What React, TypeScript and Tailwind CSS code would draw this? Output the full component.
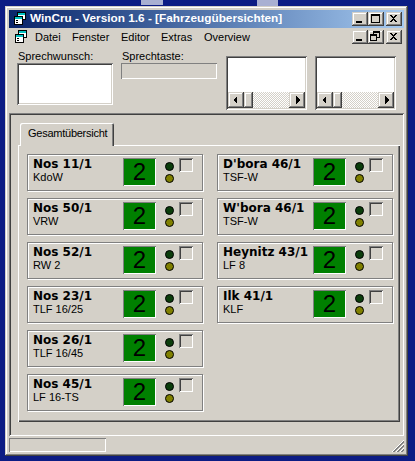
import React from 'react';

// classic 3d edges
const raised =
  'shadow-[inset_-1px_-1px_#404040,inset_1px_1px_#d4d0c8,inset_-2px_-2px_#808080,inset_2px_2px_#ffffff]';
const sunken =
  'shadow-[inset_1px_1px_#808080,inset_-1px_-1px_#ffffff,inset_2px_2px_#404040,inset_-2px_-2px_#d4d0c8]';
const thinSunken = 'shadow-[inset_1px_1px_#808080,inset_-1px_-1px_#ffffff]';

type Vehicle = { name: string; type: string };

const LEFT: Vehicle[] = [
  { name: 'Nos 11/1', type: 'KdoW' },
  { name: 'Nos 50/1', type: 'VRW' },
  { name: 'Nos 52/1', type: 'RW 2' },
  { name: 'Nos 23/1', type: 'TLF 16/25' },
  { name: 'Nos 26/1', type: 'TLF 16/45' },
  { name: 'Nos 45/1', type: 'LF 16-TS' },
];

const RIGHT: Vehicle[] = [
  { name: "D'bora 46/1", type: 'TSF-W' },
  { name: "W'bora 46/1", type: 'TSF-W' },
  { name: 'Heynitz 43/1', type: 'LF 8' },
  { name: 'Ilk 41/1', type: 'KLF' },
];

function AppIcon() {
  return (
    <svg width="14" height="14" viewBox="0 0 14 14" shapeRendering="crispEdges">
      <rect x="4.5" y="0.5" width="8" height="7" fill="#fff" stroke="#000" />
      <rect x="5" y="1" width="7" height="2" fill="#00c0c0" />
      <rect x="1.5" y="4.5" width="8" height="8" fill="#fff" stroke="#000" />
      <rect x="2" y="5" width="7" height="2" fill="#00c0c0" />
      <rect x="3" y="8" width="2" height="1" fill="#000" />
      <rect x="3" y="10" width="2" height="1" fill="#000" />
    </svg>
  );
}

function CaptionButton({ kind, gap }: { kind: 'min' | 'max' | 'restore' | 'close'; gap?: boolean }) {
  return (
    <div className={`w-[16px] h-[14px] bg-[#d4d0c8] ${raised} ${gap ? 'ml-[2px]' : ''}`}>
      <svg width="16" height="14" viewBox="0 0 16 14" shapeRendering="crispEdges">
        {kind === 'min' && <rect x="4" y="9" width="6" height="2" fill="#000" />}
        {kind === 'max' && (
          <>
            <rect x="3.5" y="2.5" width="8" height="8" fill="none" stroke="#000" />
            <rect x="3" y="2" width="9" height="2" fill="#000" />
          </>
        )}
        {kind === 'restore' && (
          <>
            <rect x="5.5" y="1.5" width="6" height="6" fill="none" stroke="#000" />
            <rect x="5" y="1" width="7" height="2" fill="#000" />
            <rect x="2.5" y="4.5" width="6" height="6" fill="#d4d0c8" stroke="#000" />
            <rect x="2" y="4" width="7" height="2" fill="#000" />
          </>
        )}
        {kind === 'close' && (
          <path
            d="M4 3h2v1h1v1h1v-1h1v-1h2v1h-1v1h-1v1h-1v1h1v1h1v1h1v1h-2v-1h-1v-1h-1v1h-1v1h-2v-1h1v-1h1v-1h1v-1h-1v-1h-1v-1h-1z"
            fill="#000"
          />
        )}
      </svg>
    </div>
  );
}

function ScrollArrow({ dir }: { dir: 'left' | 'right' }) {
  return (
    <div className={`w-[16px] h-[16px] bg-[#d4d0c8] ${raised}`}>
      <svg width="16" height="16" viewBox="0 0 16 16" shapeRendering="crispEdges">
        {dir === 'left' ? (
          <polygon points="5,8 9,4 9,12" fill="#000" />
        ) : (
          <polygon points="11,8 7,4 7,12" fill="#000" />
        )}
      </svg>
    </div>
  );
}

function ListBox() {
  return (
    <div className={`w-[81px] h-[54px] bg-white p-[2px] flex flex-col justify-end ${sunken}`}>
      <div className="flex h-[16px]">
        <ScrollArrow dir="left" />
        <div className={`w-[9px] h-[16px] bg-[#d4d0c8] ${raised}`} />
        <div className="flex-1 bg-[repeating-conic-gradient(#ffffff_0%_25%,#d4d0c8_0%_50%)] bg-[length:2px_2px]" />
        <ScrollArrow dir="right" />
      </div>
    </div>
  );
}

function VehicleCard({ v }: { v: Vehicle }) {
  return (
    <div className="w-[176px] h-[37px] flex border border-[#808080] shadow-[1px_1px_0_#ffffff,inset_1px_1px_0_#ffffff]">
      <div className="w-[95px] pl-[5px] pt-[2px]">
        <div className="font-['DejaVu_Sans',sans-serif] font-bold text-[12px] leading-[14px] whitespace-nowrap">
          {v.name}
        </div>
        <div className="text-[11px] leading-[13px] whitespace-nowrap">{v.type}</div>
      </div>
      <div
        className={`mt-[3px] w-[33px] h-[28px] bg-[#008000] flex items-center justify-center text-[24px] leading-none ${thinSunken}`}
      >
        2
      </div>
      <div className="ml-[9px] mt-[7px] flex flex-col gap-[3px]">
        <div className="w-[9px] h-[9px] rounded-full border border-black bg-[#0b3d0b]" />
        <div className="w-[9px] h-[9px] rounded-full border border-black bg-[#808000]" />
      </div>
      <div className={`ml-[5px] mt-[3px] w-[14px] h-[14px] bg-[#d4d0c8] ${sunken}`} />
    </div>
  );
}

function SizeGrip() {
  return (
    <svg width="12" height="12" viewBox="0 0 12 12">
      {[0, 4, 8].map(k => (
        <g key={k}>
          <line x1={k} y1={12} x2={12} y2={k} stroke="#ffffff" />
          <line x1={k + 1} y1={12} x2={12} y2={k + 1} stroke="#808080" />
          <line x1={k + 2} y1={12} x2={12} y2={k + 2} stroke="#808080" />
        </g>
      ))}
    </svg>
  );
}

export default function App() {
  return (
    <div className="w-[415px] h-[461px] overflow-hidden bg-[#0c1c84] font-['Liberation_Sans',Arial,sans-serif] text-[11px] text-black">
      {/* desktop icons peeking out above the window */}
      <div className="flex h-[6px]">
        <div className="ml-[141px] w-[22px] h-[5px] bg-[#a9b0d2]" />
        <div className="ml-[94px] w-[21px] h-[6px] bg-[#a9b0d2]" />
      </div>

      <div className={`ml-[5px] w-[403px] h-[450px] bg-[#d4d0c8] p-[4px] flex flex-col ${raised}`}>
        {/* Title bar */}
        <div className="h-[18px] flex items-center bg-linear-to-r from-[#0a246a] to-[#a6caf0] pl-[4px]">
          <AppIcon />
          <span className="ml-[3px] text-white font-bold text-[11.8px] whitespace-nowrap">
            WinCru - Version 1.6 - [Fahrzeugübersichten]
          </span>
          <div className="ml-auto mr-[2px] flex">
            <CaptionButton kind="min" />
            <CaptionButton kind="max" />
            <CaptionButton kind="close" gap />
          </div>
        </div>

        {/* Menu bar */}
        <div className="h-[18px] flex items-center pl-[5px]">
          <AppIcon />
          <div className="ml-[1px] flex">
            <span className="w-[37px] px-[6px]">Datei</span>
            <span className="w-[49px] px-[6px]">Fenster</span>
            <span className="w-[40px] px-[6px]">Editor</span>
            <span className="w-[43px] px-[6px]">Extras</span>
            <span className="px-[6px]">Overview</span>
          </div>
          <div className="ml-auto mr-[2px] flex">
            <CaptionButton kind="min" />
            <CaptionButton kind="restore" />
            <CaptionButton kind="close" gap />
          </div>
        </div>

        {/* Client area */}
        <div className="flex-1 flex flex-col">
          <div className="h-[67px] flex">
            <div className="ml-[8px] w-[96px] pt-[4px]">
              <div className="leading-[13px] pl-[1px]">Sprechwunsch:</div>
              <div className={`h-[42px] bg-white ${sunken}`} />
            </div>
            <div className="ml-[8px] w-[96px] pt-[4px]">
              <div className="leading-[13px] pl-[1px]">Sprechtaste:</div>
              <div className={`h-[16px] ${thinSunken}`} />
            </div>
            <div className="ml-[9px] mt-[10px]">
              <ListBox />
            </div>
            <div className="ml-[8px] mt-[10px]">
              <ListBox />
            </div>
          </div>

          <div className={`h-[323px] pl-[9px] pt-[10px] ${sunken}`}>
            <div className="w-[382px]">
              <div className="h-[22px] flex">
                <div className="relative z-10 ml-[2px] w-[94px] h-[23px] bg-[#d4d0c8] rounded-t-[2px] pl-[8px] pt-[4px] leading-[13px] tracking-[-0.25px] whitespace-nowrap shadow-[inset_1px_1px_#ffffff,inset_-1px_0_#404040,inset_-2px_0_#808080]">
                  Gesamtübersicht
                </div>
              </div>
              <div className="h-[277px] pl-[9px] pt-[9px] flex gap-[14px] shadow-[inset_1px_1px_#ffffff,inset_-1px_-1px_#404040,inset_-2px_-2px_#808080]">
                <div className="flex flex-col gap-[7px]">
                  {LEFT.map(v => (
                    <VehicleCard key={v.name} v={v} />
                  ))}
                </div>
                <div className="flex flex-col gap-[7px]">
                  {RIGHT.map(v => (
                    <VehicleCard key={v.name} v={v} />
                  ))}
                </div>
              </div>
            </div>
          </div>

          {/* Status bar */}
          <div className="mt-[2px] h-[14px] flex items-end">
            <div className={`w-[97px] h-[14px] ${thinSunken}`} />
            <div className="ml-auto">
              <SizeGrip />
            </div>
          </div>
        </div>
      </div>
    </div>
  );
}
